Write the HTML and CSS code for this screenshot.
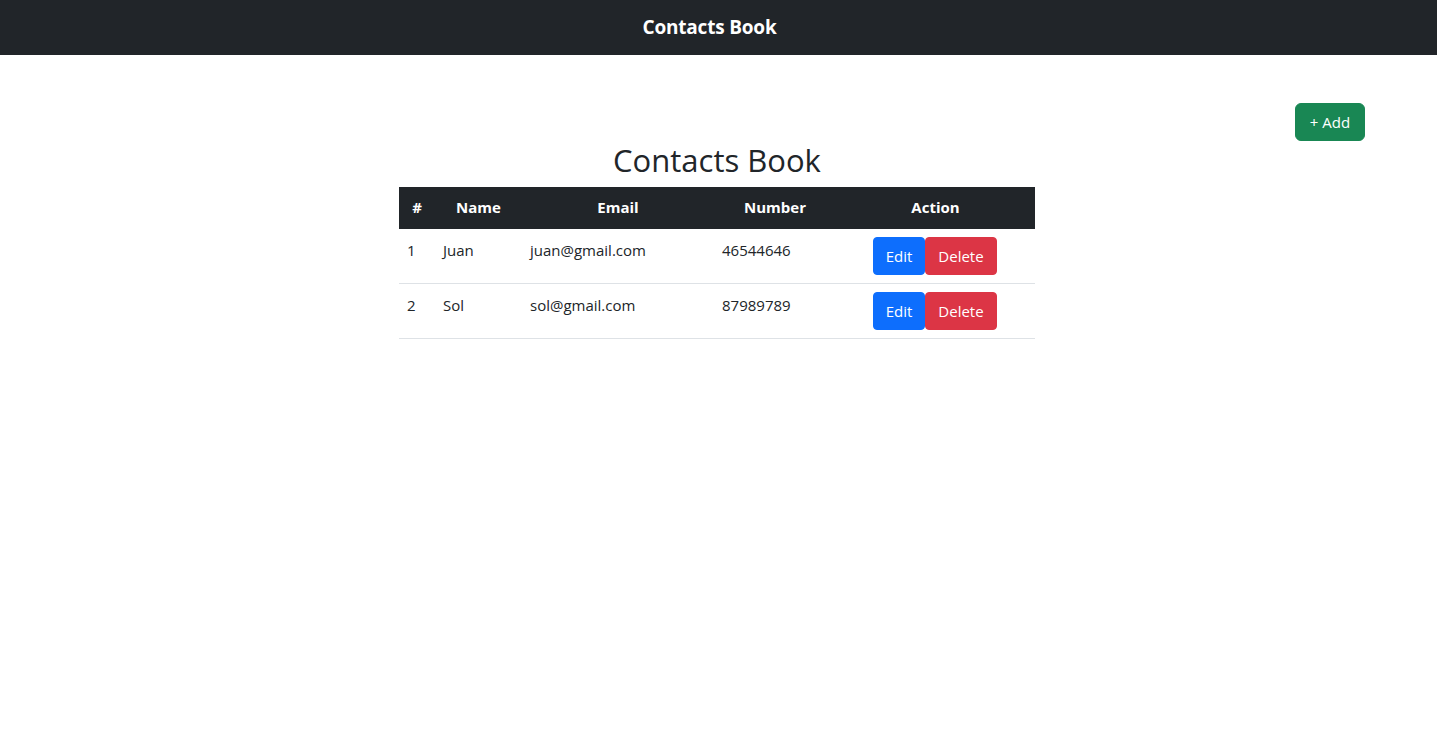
FILE: index.html
```html
<!DOCTYPE html>
<html lang="en">
<head>
<meta charset="utf-8">
<title>Contacts Book</title>
<link rel="stylesheet" href="styles.css">
</head>
<body>
<nav class="navbar">
  <span class="brand">Contacts Book</span>
</nav>
<main class="container">
  <div class="toolbar">
    <button class="btn btn-add">+ Add</button>
  </div>
  <h1 class="title">Contacts Book</h1>
  <table class="contacts">
    <colgroup>
      <col class="c-id"><col class="c-name"><col class="c-email"><col class="c-num"><col class="c-act">
    </colgroup>
    <thead>
      <tr><th>#</th><th>Name</th><th>Email</th><th>Number</th><th>Action</th></tr>
    </thead>
    <tbody>
      <tr>
        <td>1</td><td>Juan</td><td>juan@gmail.com</td><td>46544646</td>
        <td class="actions"><button class="btn btn-edit">Edit</button><button class="btn btn-delete">Delete</button></td>
      </tr>
      <tr>
        <td>2</td><td>Sol</td><td>sol@gmail.com</td><td>87989789</td>
        <td class="actions"><button class="btn btn-edit">Edit</button><button class="btn btn-delete">Delete</button></td>
      </tr>
    </tbody>
  </table>
</main>
</body>
</html>
```

FILE: styles.css
```css
* { box-sizing: border-box; }
html, body { margin: 0; padding: 0; }
body {
  font-family: "Open Sans", "Noto Sans", sans-serif;
  font-size: 15px;
  line-height: 1.5;
  color: #212529;
  background: #fff;
}
.navbar {
  height: 55px;
  background: #212529;
  display: flex;
  align-items: center;
  justify-content: center;
}
.brand {
  color: #fff;
  font-weight: 700;
  font-size: 19px;
  margin-right: 18px;
  letter-spacing: -0.2px;
}
.container {
  width: 1296px;
  margin-left: 69px;
}
.toolbar {
  display: flex;
  justify-content: flex-end;
  padding-top: 48px;
}
.btn {
  font-family: inherit;
  font-size: 15px;
  line-height: 24px;
  height: 38px;
  border: 1px solid transparent;
  border-radius: 6px;
  padding: 6px 12px;
  color: #fff;
  cursor: pointer;
}
.btn-add {
  background: #198754;
  border-color: #198754;
  width: 70px;
}
.title {
  margin: 0 0 8px;
  text-align: center;
  font-size: 31px;
  font-weight: 500;
  line-height: 38px;
  height: 38px;
}
.contacts {
  width: 636px;
  margin: 0 auto;
  border-collapse: collapse;
  table-layout: fixed;
}
.c-id { width: 36px; }
.c-name { width: 87px; }
.c-email { width: 192px; }
.c-num { width: 122px; }
.c-act { width: 199px; }
.contacts th {
  background: #212529;
  color: #fff;
  font-weight: 700;
  text-align: center;
  height: 42px;
  padding: 7px 8px 9px;
}
.contacts td {
  padding: 10px 8px 6px;
  vertical-align: top;
  border-bottom: 1px solid #dee2e6;
  height: 54px;
}
.contacts td.actions {
  text-align: center;
  padding: 8px 9px 8px 8px;
}
.btn-edit {
  background: #0d6efd;
  border-color: #0d6efd;
  width: 52px;
  padding: 6px 0;
  border-radius: 4px;
}
.btn-delete {
  background: #dc3545;
  border-color: #dc3545;
  width: 72px;
  padding: 6px 0;
  border-radius: 4px;
}
```
